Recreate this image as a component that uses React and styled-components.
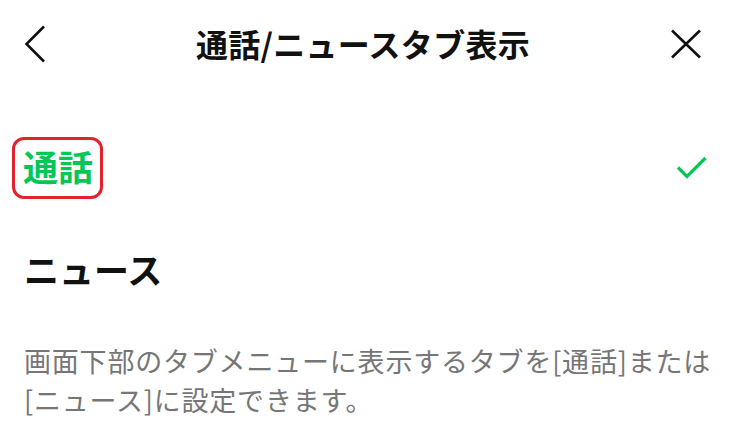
import React from "react";
import styled, { createGlobalStyle } from "styled-components";

const Global = createGlobalStyle`
  html, body { margin: 0; padding: 0; background: #fff; }
  body { font-family: "Noto Sans CJK JP", "Noto Sans", sans-serif; color: #111; }
`;

const Page = styled.div`
  width: 736px;
  height: 435px;
  background: #fff;
  overflow: hidden;
`;

const Header = styled.header`
  height: 88px;
  display: grid;
  grid-template-columns: 60px 1fr 60px;
  align-items: center;
  padding: 0 34px 0 24px;
  box-sizing: border-box;
`;

const IconButton = styled.button`
  width: 44px;
  height: 44px;
  border: 0;
  background: none;
  padding: 0;
  display: flex;
  align-items: center;
  justify-content: ${(p) => (p.$end ? "flex-end" : "flex-start")};
  justify-self: ${(p) => (p.$end ? "end" : "start")};
  color: #111;
`;

const Title = styled.h1`
  margin: 0 0 2px;
  text-align: center;
  font-size: 32px;
  font-weight: 700;
  letter-spacing: 0.3px;
  color: #111;
`;

const List = styled.ul`
  list-style: none;
  margin: 30px 0 0;
  padding: 0 28px 0 24px;
`;

const Row = styled.li`
  height: 100px;
  display: flex;
  align-items: center;
  justify-content: space-between;
`;

const Label = styled.span`
  font-size: 35px;
  font-weight: 700;
  line-height: 1;
  color: ${(p) => (p.$active ? "#06c755" : "#111")};
`;

const Highlight = styled.span`
  display: inline-block;
  margin-left: -12px;
  padding: 8px 7px 10px 8px;
  border: 3.5px solid #e1232b;
  border-radius: 12px;
`;

const Note = styled.p`
  margin: 23px 0 0;
  padding: 0 22px 0 24px;
  font-size: 27px;
  line-height: 39px;
  color: #767676;
  letter-spacing: 0.8px;
`;

const Back = () => (
  <svg width="22" height="38" viewBox="0 0 22 38" fill="none">
    <path d="M20 1.5 L2.5 19 L20 36.5" stroke="#111" strokeWidth="2.6" />
  </svg>
);

const Close = () => (
  <svg width="32" height="30" viewBox="0 0 32 30" fill="none">
    <path d="M2 1.5 L30 28.5 M30 1.5 L2 28.5" stroke="#111" strokeWidth="2.6" />
  </svg>
);

const Check = () => (
  <svg width="32" height="26" viewBox="0 0 32 26" fill="none">
    <path d="M2 12.5 L11 21.5 L29.5 3" stroke="#06c755" strokeWidth="3.2" />
  </svg>
);

export default function App() {
  return (
    <Page>
      <Global />
      <Header>
        <IconButton aria-label="戻る">
          <Back />
        </IconButton>
        <Title>通話/ニュースタブ表示</Title>
        <IconButton $end aria-label="閉じる">
          <Close />
        </IconButton>
      </Header>
      <List>
        <Row>
          <Highlight>
            <Label $active>通話</Label>
          </Highlight>
          <Check />
        </Row>
        <Row>
          <Label>ニュース</Label>
        </Row>
      </List>
      <Note>
        画面下部のタブメニューに表示するタブを[通話]または
        <br />
        [ニュース]に設定できます。
      </Note>
    </Page>
  );
}
